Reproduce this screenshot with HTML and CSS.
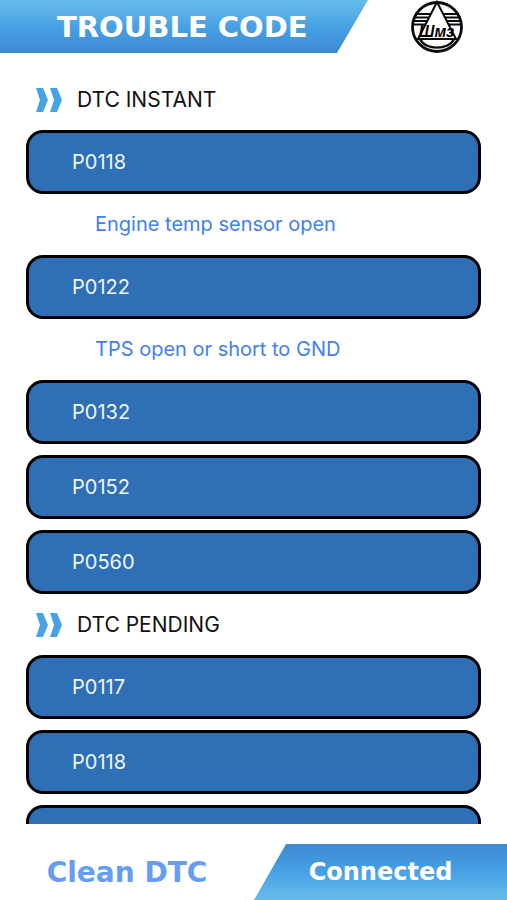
FILE: index.html
```html
<!DOCTYPE html>
<html lang="en">
<head>
<meta charset="utf-8">
<meta name="viewport" content="width=device-width, initial-scale=1">
<title>Trouble Code</title>
<link rel="stylesheet" href="styles.css">
</head>
<body>
<header class="header">
  <h1 class="banner">TROUBLE CODE</h1>
  <svg class="logo" viewBox="0 0 54 54" aria-hidden="true">
    <g fill="none" stroke="#0b0b0b">
      <circle cx="27" cy="27" r="24.5" stroke-width="2.8"/>
      <path d="M7 14h14M5 17.500h14M4 21h13M3 24.500h12M33 14h14M35 17.500h14M37 21h13M39 24.500h12" stroke-width="2.200"/>
      <path d="M27 2L8 39h38z" fill="#fff" stroke-width="2"/>
      <path d="M10 39c5 11.500 29 11.500 34 0" stroke-width="2.200"/>
    </g>
    <text class="logo-text" x="26.500" y="37" text-anchor="middle">Шмз</text>
  </svg>
</header>
<main class="codes">
  <section class="group">
    <h2 class="group-title">
      <svg class="chevrons" viewBox="0 0 28 26" aria-hidden="true"><path d="M1 1h7l5 12-5 12H1l4-12zM15 1h7l5 12-5 12h-7l4-12z"/></svg>
      DTC INSTANT
    </h2>
    <button class="code" type="button">P0118</button>
    <p class="detail">Engine temp sensor open</p>
    <button class="code" type="button">P0122</button>
    <p class="detail">TPS open or short to GND</p>
    <button class="code" type="button">P0132</button>
    <button class="code" type="button">P0152</button>
    <button class="code" type="button">P0560</button>
  </section>
  <section class="group">
    <h2 class="group-title">
      <svg class="chevrons" viewBox="0 0 28 26" aria-hidden="true"><path d="M1 1h7l5 12-5 12H1l4-12zM15 1h7l5 12-5 12h-7l4-12z"/></svg>
      DTC PENDING
    </h2>
    <button class="code" type="button">P0117</button>
    <button class="code" type="button">P0118</button>
    <button class="code" type="button"></button>
  </section>
</main>
<footer class="footer">
  <button class="clean" type="button">Clean DTC</button>
  <button class="status" type="button">Connected</button>
</footer>
</body>
</html>
```
FILE: styles.css
```css
* {
  box-sizing: border-box;
}

body {
  margin: 0;
  height: 100vh;
  display: flex;
  flex-direction: column;
  background: #fff;
  font-family: Inter, "Liberation Sans", sans-serif;
}

h1, h2, p {
  margin: 0;
}

button {
  font: inherit;
  border: 0;
  background: none;
}

.header {
  flex: none;
  display: flex;
  justify-content: space-between;
  padding-right: 43px;
}

.banner {
  width: 368px;
  height: 53px;
  padding-left: 57px;
  background: linear-gradient(#65bdec, #469ee3 55%, #3e8ad1);
  clip-path: polygon(0 0, 100% 0, calc(100% - 31px) 100%, 0 100%);
  color: #fff;
  font-family: "DejaVu Sans", sans-serif;
  font-size: 29px;
  font-weight: 700;
  line-height: 55px;
  white-space: nowrap;
}

.logo {
  width: 54px;
  height: 54px;
}

.logo-text {
  font: italic 700 16px "Liberation Sans", sans-serif;
}

.codes {
  flex: 1;
  min-height: 0;
  overflow-y: auto;
  scrollbar-width: none;
  display: flex;
  flex-direction: column;
  gap: 11px;
  padding: 26px 26px 0;
}

.group {
  flex: none;
  display: flex;
  flex-direction: column;
  gap: 11px;
}

.group-title {
  display: flex;
  align-items: center;
  gap: 14px;
  height: 39px;
  padding-left: 9px;
  color: #111;
  font-size: 21px;
  font-weight: 400;
}

.chevrons {
  width: 28px;
  height: 26px;
  fill: #48a3e6;
}

.code {
  height: 64px;
  padding: 0 43px;
  border: 3px solid #000;
  border-radius: 17px;
  background: #2e6fb6;
  color: #eef7ff;
  font-size: 20px;
  text-align: left;
}

.detail {
  padding-left: 69px;
  color: #427fee;
  font-size: 20px;
  line-height: 39px;
}

.footer {
  flex: none;
  display: flex;
  justify-content: space-between;
  height: 56px;
  margin-top: 20px;
}

.clean,
.status {
  padding: 0;
  font-family: "DejaVu Sans", sans-serif;
  font-weight: 700;
}

.clean {
  flex: 1;
  color: #659df3;
  font-size: 28px;
}

.status {
  width: 253px;
  background: linear-gradient(#3e8ad1, #469ee3 45%, #65bdec);
  clip-path: polygon(32px 0, 100% 0, 100% 100%, 0 100%);
  color: #fff;
  font-size: 24px;
}
```
